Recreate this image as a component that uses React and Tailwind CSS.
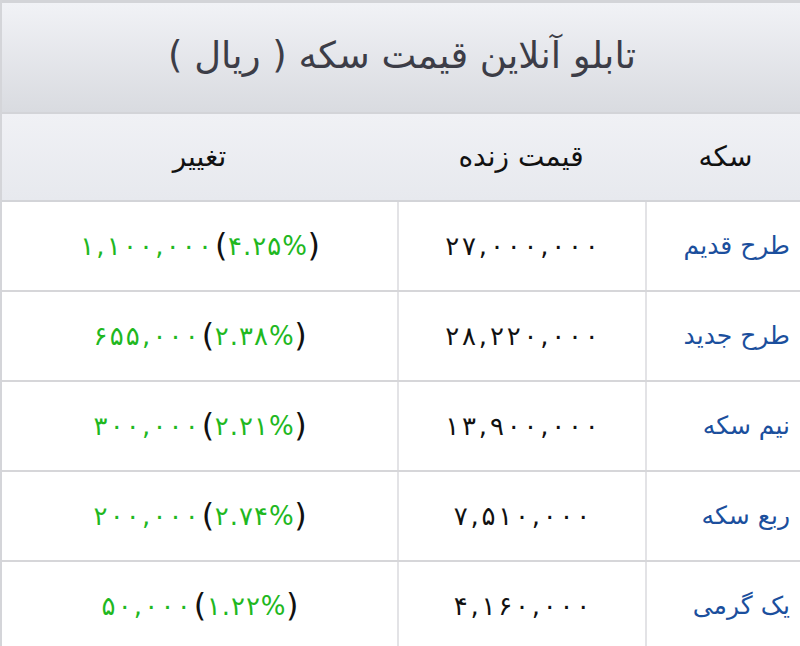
import React from "react";

const rows = [
  { name: "طرح قدیم", price: "۲۷,۰۰۰,۰۰۰", change: "۱,۱۰۰,۰۰۰", pct: "۴.۲۵%" },
  { name: "طرح جدید", price: "۲۸,۲۲۰,۰۰۰", change: "۶۵۵,۰۰۰", pct: "۲.۳۸%" },
  { name: "نیم سکه", price: "۱۳,۹۰۰,۰۰۰", change: "۳۰۰,۰۰۰", pct: "۲.۲۱%" },
  { name: "ربع سکه", price: "۷,۵۱۰,۰۰۰", change: "۲۰۰,۰۰۰", pct: "۲.۷۴%" },
  { name: "یک گرمی", price: "۴,۱۶۰,۰۰۰", change: "۵۰,۰۰۰", pct: "۱.۲۲%" },
];

const font = { fontFamily: '"DejaVu Sans", "Noto Sans", sans-serif' };

function Wide({ text, cls }) {
  return (
    <span dir="ltr" className="inline-flex">
      {Array.from(text).map((c, i) => (
        <span key={i} className={cls}>{c}</span>
      ))}
    </span>
  );
}

export default function App() {
  return (
    <div className="w-[800px] h-[646px] overflow-hidden bg-white border-l-2 border-[#d4d5d9]" style={font}>
      <div className="h-[114px] border-t-[3px] border-b-2 border-[#d3d4d8] bg-gradient-to-b from-[#f1f2f6] to-[#d9dbe0] flex items-center justify-center">
        <div dir="rtl" className="text-[37px] text-[#3c3d47] leading-none pb-[4px] pl-[2px]">
          تابلو آنلاین قیمت سکه ( ریال )
        </div>
      </div>
      <div dir="rtl" className="grid grid-cols-[155px_248px_1fr] h-[88px] bg-gradient-to-b from-[#f0f1f5] to-[#e7e9ee] border-b-2 border-[#d3d4d8]">
        <div className="flex items-center justify-center text-[28px] text-[#111] pl-[6px]">سکه</div>
        <div className="flex items-center justify-center text-[28px] text-[#111]">قیمت زنده</div>
        <div className="flex items-center justify-center text-[28px] text-[#111]">تغییر</div>
      </div>
      {rows.map((r, i) => (
        <div key={i} dir="rtl" className="grid grid-cols-[155px_248px_1fr] h-[90px] border-b-2 border-[#d6d6d9]">
          <div className="flex items-center justify-start pr-[10px] border-l-2 border-[#e3e3e6] text-[25px] text-[#1b4f9d]">
            {r.name}
          </div>
          <div className="flex items-center justify-center border-l-2 border-[#e3e3e6] text-[26px] text-[#111]">
            <Wide text={r.price} cls="px-[1.4px]" />
          </div>
          <div className="flex items-center justify-center text-[26px]">
            <div dir="ltr" className="flex items-center">
              <span className="text-[#1fb81f]"><Wide text={r.change} cls="px-[1.1px]" /></span>
              <span className="text-[#111] text-[32px] leading-none pb-[3px] ml-[2px]">(</span>
              <span className="text-[#1fb81f]"><Wide text={r.pct} cls="px-[0.5px]" /></span>
              <span className="text-[#111] text-[32px] leading-none pb-[3px]">)</span>
            </div>
          </div>
        </div>
      ))}
    </div>
  );
}
